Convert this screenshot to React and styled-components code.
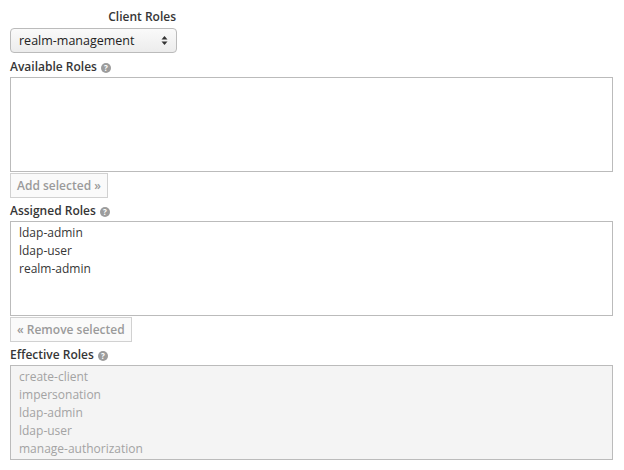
import React from "react";
import styled, { createGlobalStyle } from "styled-components";

const GlobalStyle = createGlobalStyle`
  body {
    margin: 0;
    background: #fff;
    font-family: "Open Sans", "Liberation Sans", sans-serif;
    font-size: 12px;
    color: #363636;
  }
`;

const Page = styled.div`
  padding: 6px 11px 0 10px;
  display: flex;
  flex-direction: column;
`;

const ClientRow = styled.div`
  width: 167px;
  display: flex;
  flex-direction: column;
  align-items: flex-end;
`;

const TopLabel = styled.div`
  font-weight: 600;
  line-height: 22px;
  padding-right: 1px;
`;

const Select = styled.div`
  box-sizing: border-box;
  width: 167px;
  height: 25px;
  border: 1px solid #bbb;
  border-radius: 4px;
  background: linear-gradient(#fafafa, #ececec);
  display: flex;
  align-items: center;
  justify-content: space-between;
  padding: 0 8px;
  font-size: 12.5px;
  color: #222;
`;

const Label = styled.div`
  font-weight: 600;
  line-height: 20px;
  margin-top: 4px;
  display: flex;
  align-items: center;
  gap: 4px;
`;

const Help = styled.span`
  width: 10px;
  height: 10px;
  border-radius: 50%;
  background: #9c9c9c;
  color: #fff;
  font-size: 8px;
  font-weight: 700;
  display: inline-flex;
  align-items: center;
  justify-content: center;
  line-height: 1;
  margin-top: 1px;
`;

const ListBox = styled.div`
  box-sizing: border-box;
  width: 603px;
  height: 95px;
  border: 1px solid #bbb;
  background: ${(p) => (p.$disabled ? "#f4f4f4" : "#fff")};
  color: ${(p) => (p.$disabled ? "#a3a3a3" : "#363636")};
  padding: 2px 8px 0;
  line-height: 18px;
  font-size: 12px;
  overflow: hidden;
`;

const ActionButton = styled.button`
  align-self: flex-start;
  box-sizing: border-box;
  height: 25px;
  margin-top: 1px;
  margin-bottom: -1px;
  padding: 0 6px 1px;
  border: 1px solid #d1d1d1;
  background: #fafafa;
  color: #9a9a9a;
  font-family: inherit;
  font-size: 12px;
  font-weight: 600;
  cursor: default;
`;

const HelpIcon = () => <Help>?</Help>;

export default function App() {
  return (
    <Page>
      <GlobalStyle />
      <ClientRow>
        <TopLabel>Client Roles</TopLabel>
        <Select>
          <span>realm-management</span>
          <svg width="7" height="11" viewBox="0 0 7 11">
            <path d="M0.5 4.5 L3.5 1 L6.5 4.5 Z" fill="#333" />
            <path d="M0.5 6.5 L3.5 10 L6.5 6.5 Z" fill="#333" />
          </svg>
        </Select>
      </ClientRow>

      <Label>
        Available Roles <HelpIcon />
      </Label>
      <ListBox />
      <ActionButton>Add selected »</ActionButton>

      <Label>
        Assigned Roles <HelpIcon />
      </Label>
      <ListBox>
        <div>ldap-admin</div>
        <div>ldap-user</div>
        <div>realm-admin</div>
      </ListBox>
      <ActionButton>« Remove selected</ActionButton>

      <Label>
        Effective Roles <HelpIcon />
      </Label>
      <ListBox $disabled>
        <div>create-client</div>
        <div>impersonation</div>
        <div>ldap-admin</div>
        <div>ldap-user</div>
        <div>manage-authorization</div>
      </ListBox>
    </Page>
  );
}
